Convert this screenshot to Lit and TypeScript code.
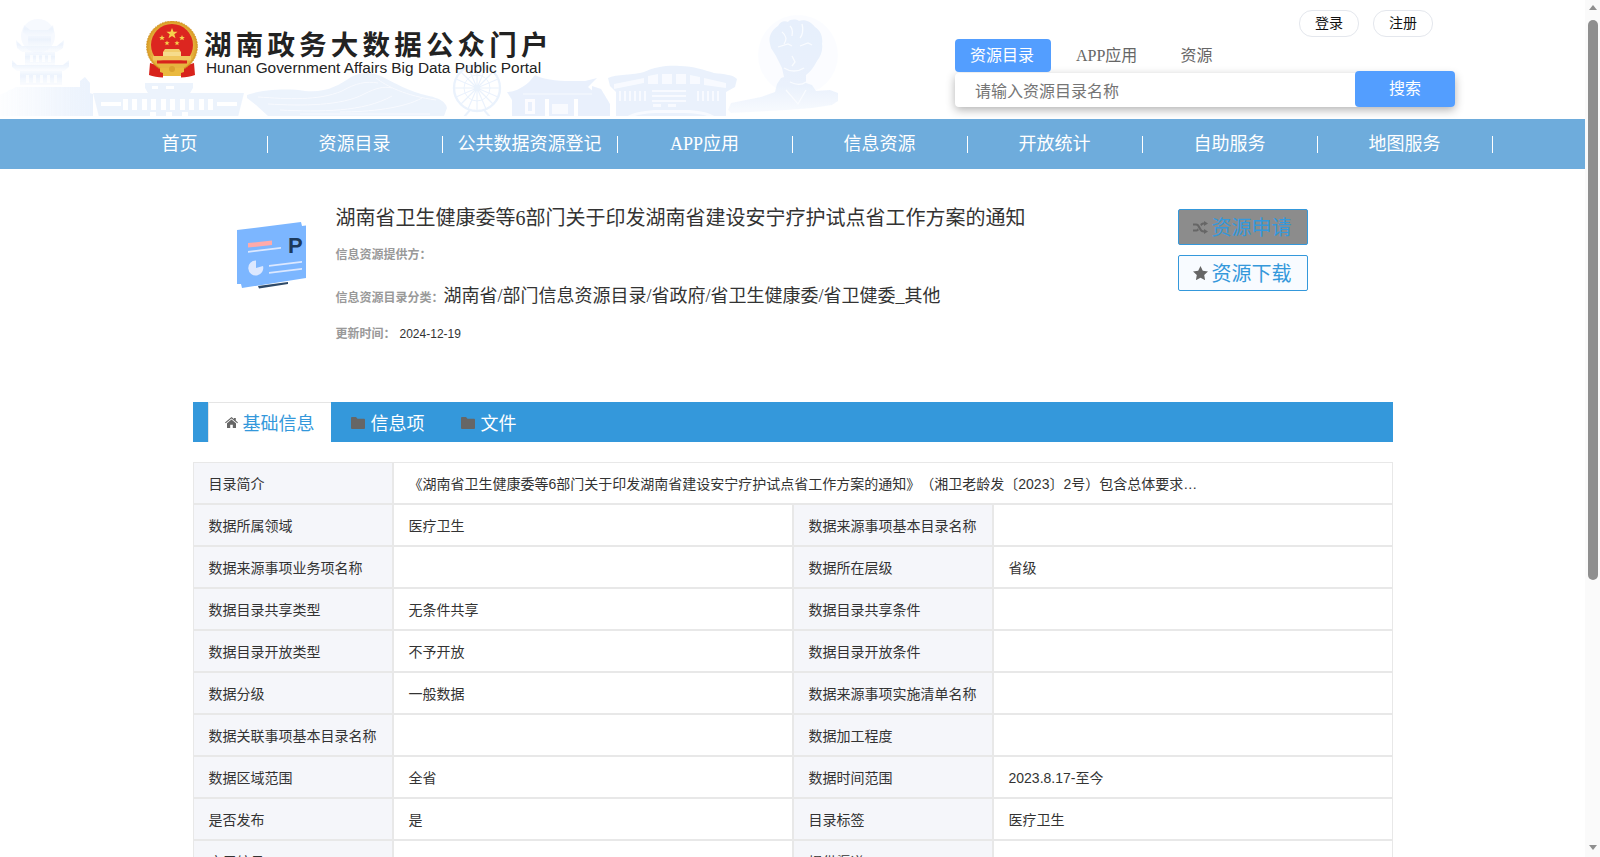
import { LitElement, html, css, svg } from "lit";
import { customElement } from "lit/decorators.js";

const NAV = ["首页", "资源目录", "公共数据资源登记", "APP应用", "信息资源", "开放统计", "自助服务", "地图服务"];
const ROWS: [string, string, string, string][] = [
  ["数据所属领域", "医疗卫生", "数据来源事项基本目录名称", ""],
  ["数据来源事项业务项名称", "", "数据所在层级", "省级"],
  ["数据目录共享类型", "无条件共享", "数据目录共享条件", ""],
  ["数据目录开放类型", "不予开放", "数据目录开放条件", ""],
  ["数据分级", "一般数据", "数据来源事项实施清单名称", ""],
  ["数据关联事项基本目录名称", "", "数据加工程度", ""],
  ["数据区域范围", "全省", "数据时间范围", "2023.8.17-至今"],
  ["是否发布", "是", "目录标签", "医疗卫生"],
  ["应用编号", "", "提供渠道", ""],
  ["更新周期", "", "发布日期", "2024-12-19"],
];

const skyline = svg`
  <defs>
    <linearGradient id="fadeL" x1="0" x2="1" y1="0" y2="0">
      <stop offset="0" stop-color="#eaf2fd" stop-opacity=".15"/>
      <stop offset=".75" stop-color="#e4eefc" stop-opacity=".8"/>
      <stop offset="1" stop-color="#e4eefc"/>
    </linearGradient>
    <linearGradient id="fadeB" x1="0" x2="0" y1="0" y2="1">
      <stop offset="0" stop-color="#eaf2fd" stop-opacity=".6"/>
      <stop offset=".35" stop-color="#e6effc"/>
      <stop offset="1" stop-color="#f2f7fe" stop-opacity=".5"/>
    </linearGradient>
    <linearGradient id="statue" x1="0" x2="0" y1="0" y2="1">
      <stop offset="0" stop-color="#dfeafb"/>
      <stop offset=".7" stop-color="#e3edfc"/>
      <stop offset="1" stop-color="#f6f9fe"/>
    </linearGradient>
  </defs>
  <!-- pagoda -->
  <circle cx="38" cy="36" r="17" fill="#f3f7fe"/>
  <g fill="url(#fadeB)">
    <path d="M30 30h18l5-5 1 7-4 4H27l-4-4 1-7z"/>
    <path d="M28 36h23v10H28z"/>
    <path d="M22 46h35l7-6-1 8-6 4H22l-5-4-1-8z"/>
    <path d="M25 52h30v13H25z"/>
    <path d="M17 65h46l6-5v7l-5 4H17l-5-4v-7z"/>
    <path d="M20 71h42v14H20z"/>
  </g>
  <g fill="#fff" opacity=".75">
    <rect x="30" y="55" width="3" height="7"/><rect x="36" y="55" width="3" height="7"/><rect x="42" y="55" width="3" height="7"/><rect x="48" y="55" width="3" height="7"/>
    <rect x="26" y="75" width="3" height="8"/><rect x="33" y="75" width="3" height="8"/><rect x="40" y="75" width="3" height="8"/><rect x="47" y="75" width="3" height="8"/><rect x="54" y="75" width="3" height="8"/>
  </g>
  <!-- city wall -->
  <path d="M0 95l16-8h64v-6l5-4 5 6v10l3 1v24H0z" fill="url(#fadeL)"/>
  <!-- hall -->
  <path d="M145 83h48v5l-3 5h54l-6 24H99l-6-24h55l-3-5z" fill="#e6effc"/>
  <rect x="152" y="86" width="6" height="3" fill="#fff"/><rect x="166" y="86" width="8" height="3" fill="#fff"/>
  <g fill="#fff">
    <rect x="101" y="102" width="20" height="4"/><rect x="123" y="99" width="5" height="11"/><rect x="132" y="99" width="5" height="11"/><rect x="142" y="99" width="5" height="11"/><rect x="151" y="99" width="5" height="11"/><rect x="161" y="99" width="5" height="11"/><rect x="170" y="99" width="5" height="11"/><rect x="180" y="99" width="5" height="11"/><rect x="189" y="99" width="5" height="11"/><rect x="199" y="99" width="5" height="11"/><rect x="208" y="99" width="5" height="11"/><rect x="217" y="102" width="20" height="4"/>
    <rect x="150" y="112" width="6" height="5"/><rect x="166" y="112" width="6" height="5"/><rect x="182" y="112" width="6" height="5"/>
  </g>
  <!-- mountain -->
  <path d="M247 95c12-5 40-7 58-4 22 2 34-6 46-14 10-5 20-5 30-1 14 7 26 15 48 20 10 2 17 6 18 12l-3 8H268l-12-11-9-7z" fill="#e6effc"/>
  <g fill="none" stroke="#f6f9ff" stroke-width="1">
    <path d="M258 97c30 2 60 4 84-6 14-8 24-10 36-8"/>
    <path d="M268 104c34 2 74 2 96-10 12-6 20-8 28-6"/>
    <path d="M280 110c40 2 84 2 112-14"/>
    <path d="M340 112c30 0 64-4 82-14"/>
    <path d="M376 78c10 8 30 18 60 22"/>
    <path d="M300 114h130"/>
  </g>
  <!-- ferris wheel -->
  <g fill="none" stroke="#e4eefc">
    <circle cx="477" cy="88" r="23" stroke-width="2.400"/>
    <circle cx="477" cy="88" r="13" stroke-width="1"/>
    <g stroke-width="1.200">
      <path d="M454 88h46M477 65v46M461 72l32 32M461 104l32-32M468 67l18 42M486 67l-18 42M456 79l42 18M456 97l42-18"/>
    </g>
    <path d="M470 110l-6 7M484 110l6 7" stroke-width="2"/>
  </g>
  <!-- house -->
  <path d="M507 92c6 0 14-3 22-10l6-7c8 4 20 6 36 6h14l12-3-9 9 12 10v20H512v-17l-5-8z" fill="#e2ecfc"/>
  <path d="M523 94h70" stroke="#fff" stroke-width="1" opacity=".6"/>
  <g fill="#fff"><rect x="525" y="99" width="10" height="15" opacity=".85"/><rect x="545" y="99" width="4" height="18"/><rect x="552" y="104" width="16" height="10" opacity=".7"/><rect x="574" y="99" width="4" height="18"/></g>
  <rect x="528" y="102" width="4" height="9" fill="#e2ecfc"/>
  <path d="M592 116V86l9 3 9 15v13z" fill="#e2ecfc"/>
  <!-- stadium -->
  <path d="M608 78c8-4 26-3 36-6 12-6 26-7 36-6 14 0 24 4 34 7 10 1 20 2 23 6l-2 8-9 5v25H616V92l-6-6z" fill="#e3edfb"/>
  <g fill="#f6f9ff">
    <path d="M614 84l30-6v5l-30 6zM648 76l10-2v10h-10zM662 74h10v10h-10zM676 74h10v10h-10zM690 75l10 2v7h-10zM704 78l22 5v5l-22-3z"/>
    <rect x="619" y="91" width="2" height="10"/><rect x="624" y="91" width="2" height="10"/><rect x="629" y="91" width="2" height="10"/><rect x="634" y="91" width="2" height="10"/><rect x="639" y="91" width="2" height="10"/><rect x="644" y="91" width="2" height="10"/>
    <rect x="652" y="90" width="34" height="2"/><rect x="652" y="95" width="34" height="2"/><rect x="652" y="100" width="34" height="2"/>
    <rect x="697" y="91" width="2" height="10"/><rect x="702" y="91" width="2" height="10"/><rect x="707" y="91" width="2" height="10"/><rect x="712" y="91" width="2" height="10"/><rect x="717" y="91" width="2" height="10"/>
    <path d="M626 117c8-5 20-7 34-7h24c14 0 24 2 32 7h-6c-8-3-16-4-26-4h-24c-12 0-20 1-28 4z"/>
    <rect x="653" y="104" width="8" height="3"/><rect x="668" y="104" width="8" height="3"/>
  </g>
  <!-- statue -->
  <circle cx="798" cy="55" r="40" fill="#fafcff"/>
  <path d="M770 44c-2-8 2-14 8-18 2-4 6-6 10-4 2-3 8-3 11-1 6-2 12 1 16 6 6 4 8 10 7 17 1 6-1 12-5 17-3 6-7 11-11 14v8l6 2 4 6 14-1 8 3v8l-6 4-20 3-25 2-56 3-3-3 3-7 30-6 14-5 2-8 4-6 3-1-2-9-6-12-5-8z" fill="url(#statue)"/>
  <g fill="none" stroke="#f8fbff" stroke-width="1.300">
    <path d="M778 47l10-3 4 2M800 46l8-3 4 2M792 56l3 6-3 4M784 68c6 4 14 4 20 0M790 82c6 3 12 3 16 0M786 90l12 14 8-14"/>
    <path d="M782 32c6 5 4 9 2 12M802 24c2 6 0 12-2 14M790 26c4 4 2 8 2 10"/>
  </g>
  <rect x="0" y="116" width="860" height="3" fill="#fff"/>
`;

const emblem = svg`
  <svg width="54" height="57" viewBox="0 0 54 57">
    <defs>
      <radialGradient id="gold"><stop offset=".72" stop-color="#ecc052"/><stop offset="1" stop-color="#d99a22"/></radialGradient>
    </defs>
    <path d="M5 42l-1 12c4 1.500 9 2.500 14 2.500V46zM49 42l1 12c-4 1.500-9 2.500-14 2.500V46z" fill="#d8231c"/>
    <circle cx="27" cy="25.500" r="25.500" fill="url(#gold)"/>
    <circle cx="27" cy="25.500" r="25.500" fill="none" stroke="#c78a1c" stroke-width=".8" stroke-dasharray="1.400 1.400"/>
    <circle cx="27" cy="24" r="21" fill="#dc2620"/>
    <path d="M5 34c4 10 12 16 22 16s18-6 22-16l-8 4c-3 2-8 3-14 3s-11-1-14-3z" fill="#e6b440"/>
    <g fill="#f6d24c">
      <path d="M27 7l1.500 3.800h4.100l-3.300 2.500 1.200 4-3.500-2.400-3.500 2.400 1.200-4-3.300-2.500h4.100z"/>
      <path d="M17 14l.8 1.900 2.100.1-1.600 1.300.5 2-1.800-1.100-1.800 1.100.5-2-1.600-1.300 2.100-.1z"/>
      <path d="M37 14l.8 1.900 2.100.1-1.600 1.300.5 2-1.800-1.100-1.800 1.100.5-2-1.600-1.300 2.100-.1z"/>
      <path d="M22 19.500l.7 1.700 1.900.1-1.500 1.200.5 1.800-1.600-1-1.600 1 .5-1.800-1.500-1.200 1.900-.1z"/>
      <path d="M32 19.500l.7 1.700 1.900.1-1.500 1.200.5 1.800-1.600-1-1.600 1 .5-1.800-1.500-1.200 1.900-.1z"/>
    </g>
    <path d="M18 31l2-3h14l2 3z" fill="#f2cd6c"/>
    <rect x="18" y="31" width="18" height="4" fill="#f6dc8c"/>
    <rect x="8" y="35" width="38" height="4.500" fill="#f0c75e"/>
    <rect x="12" y="39.500" width="30" height="3" fill="#d8231c"/>
    <path d="M15 47h24v4l-3 1v3H18v-3l-3-1z" fill="#eab93f"/>
    <circle cx="27" cy="48" r="3" fill="#d9a22f"/>
  </svg>
`;

const cardIcon = svg`
  <svg width="70" height="68" viewBox="0 0 70 68">
    <path d="M21 64l30-4v2l-29 4.500z" fill="#2f4a68"/>
    <path d="M0 8L64 0l1 4 4-.5V56L5 66l-1-4-4 0z" fill="#7cb6ff"/>
    <path d="M11 21l24-2.500V23L11 25.500z" fill="#ffaaaa"/>
    <path d="M11 29l33-4v1.800l-33 4z" fill="#dce8ff"/>
    <path d="M32 43l33-4v1.800l-33 4zM32 50l33-4v1.800l-33 4z" fill="#dce8ff"/>
    <path d="M19 46V38.500A7.500 7.500 0 1 0 26 44z" fill="#dce8ff"/>
    <text x="51" y="31" font-family="Liberation Sans, sans-serif" font-weight="700" font-size="22" fill="#1d3a5c">P</text>
  </svg>
`;

const iconRandom = svg`<svg class="ic" width="15" height="13" viewBox="0 0 15 13"><path d="M0 2.500h3c2 0 3 1.200 4 3l1 1.800c.8 1.400 1.500 2.200 3 2.200V8l4 2.500-4 2.500v-1.500c-2.500 0-3.800-1.200-4.800-3l-1-1.800C4.500 5.200 4 4.500 3 4.500H0zM0 8.500h3c.8 0 1.300-.5 1.800-1.300l1.100 2C5.100 10 4.200 10.500 3 10.500H0zM11 1V0l4 2.500L11 5V3.500c-1.300 0-2 .6-2.700 1.700l-1.100-2C8 2 9.300 1.500 11 1.500z" fill="currentColor"/></svg>`;
const iconStar = svg`<svg class="ic" width="15" height="14" viewBox="0 0 15 14"><path d="M7.500 0l2.300 4.700 5.200.8-3.800 3.600.9 5.100-4.600-2.400-4.600 2.400.9-5.100L0 5.500l5.200-.8z" fill="currentColor"/></svg>`;
const iconHome = svg`<svg class="ic" width="13" height="11" viewBox="0 0 13 11"><path d="M6.500 0L9 2.100V1h1.800v2.600L13 5.500l-.7.800-5.800-4.800L.7 6.300 0 5.500zM2 6.300l4.500-3.700L11 6.300V11H7.800V7.800H5.200V11H2z" fill="currentColor"/></svg>`;
const iconFolder = svg`<svg class="ic folder" width="14" height="12" viewBox="0 0 14 12"><path d="M1 0h4l1.500 1.800H13a1 1 0 0 1 1 1V11a1 1 0 0 1-1 1H1a1 1 0 0 1-1-1V1a1 1 0 0 1 1-1z" fill="currentColor"/></svg>`;

@customElement("app-root")
export class AppRoot extends LitElement {
  static styles = css`
    :host {
      display: flex;
      height: 100vh;
      overflow: hidden;
      background: #fff;
      color: #333;
      font-family: "Liberation Serif", "Noto Sans CJK SC", serif;
      text-spacing-trim: space-all;
    }
    .page { flex: 1; min-width: 0; overflow-y: auto; scrollbar-width: none; }
    .bar { width: 15px; flex: none; background: #fafafa; display: flex; flex-direction: column; align-items: center; padding: 5px 0 7px; box-sizing: border-box; }
    .up { width: 0; height: 0; border: 4.500px solid transparent; border-top: 0; border-bottom: 5px solid #8f8f8f; }
    .dn { width: 0; height: 0; border: 4.500px solid transparent; border-bottom: 0; border-top: 5px solid #8f8f8f; margin-top: auto; }
    .thumb { width: 10px; height: 560px; margin-top: 10px; border-radius: 5px; background: #8f8f8f; }

    .header { position: relative; height: 119px; display: flex; padding-left: 145px; overflow: hidden; }
    .skyline { position: absolute; left: 0; top: 0; opacity: .75; filter: blur(.45px); }
    .logo { position: relative; width: 810px; padding-top: 21px; display: flex; gap: 5px; align-items: flex-start; }
    .logo-text { padding-top: 8px; }
    .logo-cn { font: 700 27.500px/28px "Noto Sans CJK SC", sans-serif; letter-spacing: 4.200px; color: #222; white-space: nowrap; }
    .logo-en { font: 15.400px/16px "Liberation Sans", sans-serif; color: #222; padding-left: 2px; margin-top: 3px; white-space: nowrap; }
    .right { position: relative; width: 500px; }
    .auth { display: flex; gap: 14px; padding: 10px 0 0 344px; }
    .auth span { width: 60px; height: 27px; box-sizing: border-box; border: 1px solid #e4e7ed; border-radius: 13px; font: 14px/25px "Liberation Sans", "Noto Sans CJK SC", sans-serif; color: #111; text-align: center; background: #fff; }
    .tabs { display: flex; gap: 13px; margin-top: 2px; height: 33px; }
    .tabs span { padding: 0 15px; font-size: 16px; line-height: 33px; color: #666; }
    .tabs span.on { background: #539eff; color: #fff; border-radius: 4px; padding-right: 17px; margin-right: -3px; }
    .search { height: 34px; margin-top: 1px; display: flex; border-radius: 4px; background: #fff; box-shadow: 0 3px 10px rgba(0,0,0,.3); }
    .placeholder { flex: 1; padding-left: 20px; font: 16px/34px "Noto Sans CJK SC", sans-serif; color: #757575; }
    .go { width: 100px; height: 36px; margin-top: -2px; background: #539eff; color: #fff; border-radius: 4px; font-size: 16px; line-height: 36px; text-align: center; }

    .nav { height: 50px; background: #6eacdc; display: flex; justify-content: center; align-items: center; }
    .nav span { width: 175px; height: 17px; box-sizing: border-box; border-right: 1px solid #fff; color: #fff; font-size: 18px; line-height: 17px; text-align: center; white-space: nowrap; }

    .wrap { width: 1200px; margin: 0 auto; padding-bottom: 293px; }
    .detail { display: grid; grid-template-columns: 98.500px 842px 130px; padding-left: 44.500px; height: 233px; box-sizing: border-box; }
    .pic { padding-top: 53px; }
    .meta { padding-top: 34px; }
    .title { font-size: 20px; line-height: 30px; color: #333; margin-bottom: 2px; white-space: nowrap; }
    .row { height: 40px; line-height: 40px; display: flex; align-items: baseline; white-space: nowrap; }
    .row.mid { margin-top: 1px; }
    .row.last { margin-top: -2px; }
    .lab { font: 700 12px/40px "Liberation Sans", "Noto Sans CJK SC", sans-serif; color: #999; }
    .cat { font-size: 18px; color: #333; }
    .date { font: 12px/40px "Liberation Sans", sans-serif; color: #333; margin-left: 4px; }
    .btns { padding-top: 40px; display: flex; flex-direction: column; gap: 10px; }
    .btn { height: 36px; box-sizing: border-box; border: 1px solid #3498db; border-radius: 2px; display: flex; align-items: center; gap: 4px; padding-left: 14px; color: #3498db; font: 20px/34px "Noto Sans CJK SC", sans-serif; background: #f8fbff; white-space: nowrap; }
    .btn.grey { background: #8c8c8c; }
    .ic { color: #666; flex: none; }
    .folder { margin-top: 2px; }

    .tabbar { height: 40px; background: #3498db; display: flex; padding-left: 15px; gap: 5px; }
    .tab { display: flex; align-items: center; gap: 6px; padding: 0 15px; color: #fff; font: 18px/38px "Noto Sans CJK SC", sans-serif; }
    .tab + .tab + .tab { margin-left: 1px; }
    .tab.on { background: #fff; color: #3498db; border-top: 1px solid #e5e5e5; border-left: 1px solid #e5e5e5; gap: 5px; padding: 0 16px 1px; }

    .grid { margin-top: 20px; display: grid; grid-template-columns: 200px 400px 200px 400px; grid-auto-rows: 42px; font: 14px/42px "Liberation Sans", "Noto Sans CJK SC", sans-serif; color: #333; }
    .grid > div { box-sizing: border-box; border: 1px solid #e8e8e8; padding-left: 15px; white-space: nowrap; overflow: hidden; }
    .grid .k { background: #f5f6fa; }
    .grid .wide { grid-column: span 3; }
  `;

  render() {
    return html`
      <div class="page">
        <div class="header">
          <svg class="skyline" width="860" height="119" viewBox="0 0 860 119">${skyline}</svg>
          <div class="logo">
            ${emblem}
            <div class="logo-text">
              <div class="logo-cn">湖南政务大数据公众门户</div>
              <div class="logo-en">Hunan Government Affairs Big Data Public Portal</div>
            </div>
          </div>
          <div class="right">
            <div class="auth"><span>登录</span><span>注册</span></div>
            <div class="tabs"><span class="on">资源目录</span><span>APP应用</span><span>资源</span></div>
            <div class="search">
              <div class="placeholder">请输入资源目录名称</div>
              <div class="go">搜索</div>
            </div>
          </div>
        </div>
        <div class="nav">${NAV.map((n) => html`<span>${n}</span>`)}</div>
        <div class="wrap">
          <div class="detail">
            <div class="pic">${cardIcon}</div>
            <div class="meta">
              <div class="title">湖南省卫生健康委等6部门关于印发湖南省建设安宁疗护试点省工作方案的通知</div>
              <div class="row"><span class="lab">信息资源提供方：</span></div>
              <div class="row mid"><span class="lab">信息资源目录分类：</span><span class="cat">湖南省/部门信息资源目录/省政府/省卫生健康委/省卫健委_其他</span></div>
              <div class="row last"><span class="lab">更新时间：</span><span class="date">2024-12-19</span></div>
            </div>
            <div class="btns">
              <div class="btn grey">${iconRandom}资源申请</div>
              <div class="btn">${iconStar}资源下载</div>
            </div>
          </div>
          <div class="tabbar">
            <div class="tab on">${iconHome}基础信息</div>
            <div class="tab">${iconFolder}信息项</div>
            <div class="tab">${iconFolder}文件</div>
          </div>
          <div class="grid">
            <div class="k">目录简介</div>
            <div class="wide">《湖南省卫生健康委等6部门关于印发湖南省建设安宁疗护试点省工作方案的通知》（湘卫老龄发〔2023〕2号）包含总体要求…</div>
            ${ROWS.map((r) => html`
              <div class="k">${r[0]}</div><div>${r[1]}</div>
              <div class="k">${r[2]}</div><div>${r[3]}</div>
            `)}
          </div>
        </div>
      </div>
      <div class="bar" aria-hidden="true"><div class="up"></div><div class="thumb"></div><div class="dn"></div></div>
    `;
  }
}
